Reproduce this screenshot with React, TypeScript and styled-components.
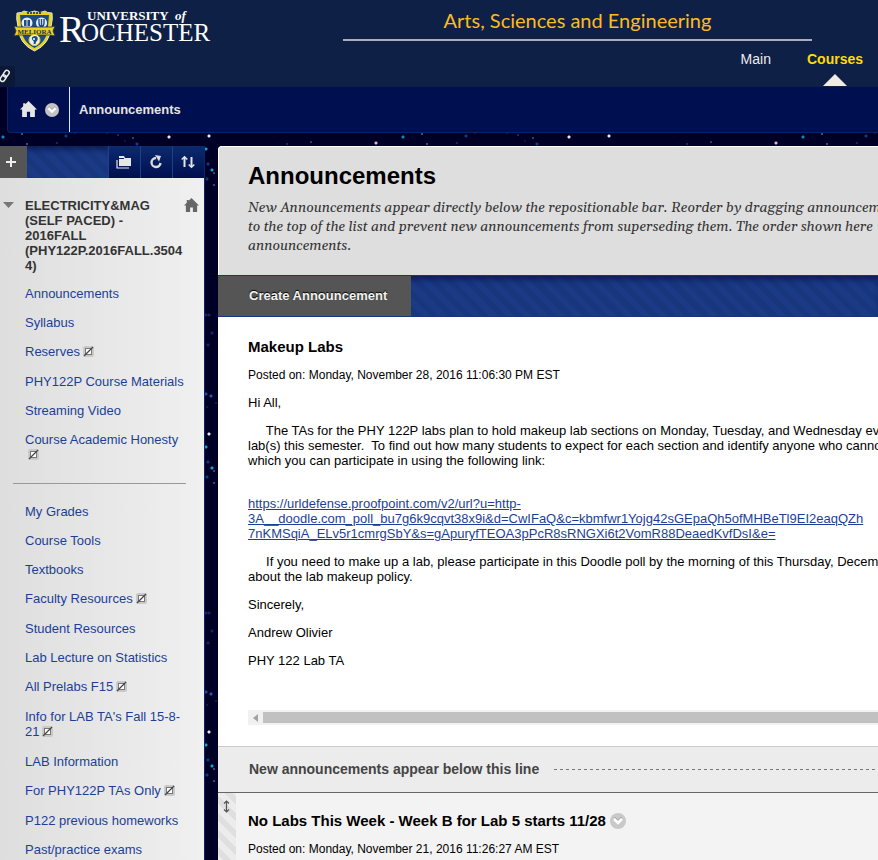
import React from "react";
import styled, { createGlobalStyle, css } from "styled-components";

type Star = [number, number, string, number];

const stars: Star[] = [
  [3, 137, "#1387c4", 1], [22, 134, "#e8ecff", 0], [66, 136, "#0d3c80", 1], [75, 133, "#0b62b8", 0],
  [107, 133, "#4b5378", 0], [118, 135, "#12a3cc", 0], [133, 138, "#b9c4ee", 0], [169, 137, "#f1e6f0", 1],
  [209, 136, "#f1e6ff", 1], [287, 144, "#12a3cc", 0], [311, 142, "#b9c4f4", 0], [376, 143, "#e3b4d9", 1],
  [27, 144, "#ffffff", 0], [57, 143, "#128fcd", 0], [137, 144, "#0d3c80", 1], [125, 141, "#10519a", 0],
  [206, 149, "#12a3cc", 1], [208, 164, "#0d3c80", 1], [212, 170, "#12a3cc", 1], [214, 173, "#e8ecff", 0],
  [207, 179, "#0d3c80", 1], [214, 185, "#e8ecff", 0], [206, 17, "#1b2065", 1], [209, 17, "#1b2065", 1],
  [212, 35, "#1b2065", 1], [208, 47, "#1b2065", 1], [206, 96, "#214b9a", 1], [211, 98, "#2b57a8", 1],
  [207, 109, "#2b57a8", 0], [216, 105, "#2b57a8", 0], [32, 220, "#128fcd", 1],
  [95, 250, "#e8ecff", 0], [330, 60, "#12a3cc", 1],
];

const starField = stars
  .map(([x, y, color, r]) => `radial-gradient(circle at ${x}px ${y}px, ${color} ${r}px, transparent ${r + 1}px)`)
  .join(", ");

const GlobalStyle = createGlobalStyle`
  *, *::before, *::after { box-sizing: border-box; }
  body {
    margin: 0;
    background: #000020;
    font: 13px/15px "Liberation Sans", Arial, sans-serif;
    color: #000;
  }
  p, h1, h2, h3, ul { margin: 0; padding: 0; }
  button { font: inherit; border: 0; padding: 0; cursor: pointer; }
  svg { display: block; }
`;

const stripes = css`
  background: repeating-linear-gradient(45deg, #1a3a86 0 6px, #18367e 6px 12px);
  box-shadow: inset 0 6px 6px -3px rgba(0, 8, 50, 0.6);
`;

const Page = styled.div`
  height: 100vh;
  overflow: hidden;
  display: flex;
  flex-direction: column;
  background-color: #000027;
  background-image: ${starField};
  background-size: 400px 298px;
`;

const Header = styled.header`
  position: relative;
  flex: none;
  display: flex;
  height: 87px;
  background: #0f2046;
`;

const Brand = styled.a`
  flex: none;
  display: flex;
  width: 343px;
  padding: 5px 0 0 12px;
`;

const Banner = styled.div`
  flex: 1;
  display: flex;
  flex-direction: column;
  justify-content: space-between;
`;

const School = styled.div`
  margin-right: 66px;
  height: 41px;
  border-bottom: 2px solid #a9adbc;
  text-align: center;
  font: 20px/41px Lato, sans-serif;
  color: #fdbb1d;
`;

const Tabs = styled.nav`
  display: flex;
  justify-content: flex-end;
  gap: 36px;
  padding-right: 15px;
`;

const Tab = styled.a<{ $active?: boolean }>`
  display: flex;
  flex-direction: column;
  align-items: center;
  height: 37px;
  font-size: 14px;
  line-height: 18px;
  text-decoration: none;
  font-weight: ${(p) => (p.$active ? 700 : 400)};
  color: ${(p) => (p.$active ? "#ffdd00" : "#ececec")};
  &::after {
    content: "";
    display: ${(p) => (p.$active ? "block" : "none")};
    margin-top: 6px;
    border: 12px solid transparent;
    border-top: 0;
    border-bottom-color: #f0ece4;
  }
`;

const QuickLinks = styled.button`
  position: absolute;
  left: 0;
  bottom: 0;
  width: 15px;
  height: 21px;
  background: #0c1836;
  border-radius: 0 4px 0 0;
`;

const Crumbs = styled.nav`
  flex: none;
  display: flex;
  align-items: stretch;
  height: 46px;
  margin-left: 7px;
  background: #000f4f;
  border: 1px solid #06246a;
  border-width: 0 0 1px 1px;
  border-radius: 0 0 0 4px;
`;

const CrumbHome = styled.div`
  display: flex;
  align-items: center;
  gap: 8px;
  width: 62px;
  padding-left: 12px;
  border-right: 1px solid #dfe2ee;
`;

const CrumbLabel = styled.span`
  padding-left: 9px;
  line-height: 45px;
  font-weight: 700;
  color: #e4e4e4;
`;

const IconButton = styled.button`
  display: block;
  background: none;
`;

const Body = styled.div`
  flex: 1;
  min-height: 0;
  display: flex;
  align-items: stretch;
  gap: 13px;
  padding-top: 13px;
`;

const Sidebar = styled.aside`
  flex: none;
  width: 205px;
  overflow: hidden;
  border-right: 1px solid #0c2766;
  background: linear-gradient(to right, #dedede, #f0f0f0);
`;

const MenuBar = styled.div`
  display: flex;
  height: 32px;
  justify-content: flex-end;
  ${stripes}
`;

const AddButton = styled.button`
  width: 27px;
  margin-right: auto;
  display: grid;
  place-items: center;
  padding-right: 5px;
  background: #555;
`;

const ToolButton = styled.button`
  width: 32px;
  display: grid;
  place-items: center;
  background: linear-gradient(#0c2a6e, #000f4f);
  box-shadow: inset 1px 0 #1d4088;
`;

const CourseTitle = styled.div`
  display: flex;
  align-items: flex-start;
  padding: 20px 5px 13px 3px;
`;

const CourseName = styled.h2`
  flex: 1;
  min-width: 0;
  margin-left: 11px;
  font-size: 13px;
  line-height: 15px;
  color: #333;
  overflow-wrap: anywhere;
`;

const Toggle = styled(IconButton)`
  padding-top: 4px;
`;

const Menu = styled.ul`
  list-style: none;
  padding: 0 18px 0 25px;
`;

const MenuItem = styled.li<{ $hidden?: boolean }>`
  padding-bottom: ${(p) => (p.$hidden ? 15 : 14)}px;
`;

const MenuLink = styled.a`
  color: #1c3f95;
  text-decoration: none;
`;

const HiddenMark = styled.span`
  display: inline-block;
  margin-left: 3px;
  vertical-align: -1px;
`;

const Divider = styled.hr`
  margin: 6px 18px 20px 13px;
  border: 0;
  border-top: 1px solid #999;
`;

const Main = styled.main`
  flex: 1;
  min-width: 0;
  overflow: hidden;
  background: #fff;
  border-radius: 4px 0 0 0;
`;

const PageTitle = styled.div`
  padding: 15px 0 19px 29px;
  border: 1px solid #fff;
  border-width: 1px 0 0 1px;
  border-radius: 4px 0 0 0;
  background: #dedede;
`;

const Title = styled.h1`
  font-size: 24px;
  line-height: 28px;
`;

const Instructions = styled.p`
  padding-top: 9px;
  font: italic 14px/19px Georgia, Gelasio, "Liberation Serif", serif;
  white-space: nowrap;
  color: #333;
`;

const ActionBar = styled.div`
  display: flex;
  height: 42px;
  border: solid #17357c;
  border-width: 1px 0;
  ${stripes}
`;

const CreateButton = styled.a`
  padding: 0 24px 0 31px;
  background: #555;
  color: #f2f2f2;
  font-weight: 700;
  font-size: 13px;
  line-height: 40px;
  text-decoration: none;
  text-shadow: 0 -1px 1px #000;
`;

const Post = styled.article`
  padding: 21px 0 0 30px;
  height: 429px;
  display: flex;
  flex-direction: column;
`;

const PostTitle = styled.h3`
  display: flex;
  align-items: center;
  gap: 4px;
  font-size: 15px;
  line-height: 18px;
`;

const Posted = styled.p`
  padding-top: 12px;
  font-size: 12px;
  line-height: 15px;
`;

const Para = styled.p<{ $gap?: number }>`
  padding-top: ${(p) => p.$gap ?? 13}px;
  white-space: pre;
`;

const BodyLink = styled.a`
  color: #1c3f95;
`;

const ScrollTrack = styled.div`
  display: flex;
  align-items: center;
  height: 15px;
  margin: auto 0 21px;
  background: #f1f1f1;
`;

const ScrollArrow = styled.button`
  width: 15px;
  height: 15px;
  display: grid;
  place-items: center;
  background: none;
`;

const ScrollThumb = styled.div`
  flex: 1;
  height: 11px;
  background: #c1c1c1;
`;

const DropLine = styled.div`
  display: flex;
  align-items: center;
  gap: 15px;
  height: 47px;
  padding-left: 31px;
  border-top: 1px solid #ccc;
  border-bottom: 1px solid #666;
  background: #ececec;
  color: #444;
  font-size: 14px;
  font-weight: 700;
  &::after {
    content: "";
    flex: 1;
    height: 1px;
    background: repeating-linear-gradient(to right, #777 0 3px, transparent 3px 6px);
  }
`;

const DraggablePost = styled.article`
  display: flex;
  background: #f3f3f3;
`;

const DragHandle = styled.div`
  width: 18px;
  margin-right: 12px;
  padding: 7px 0 0 5px;
  background: repeating-linear-gradient(45deg, #ececec 0 6px, #dfdfdf 6px 12px);
`;

const DragContent = styled.div`
  padding: 19px 0 40px;
`;

const Crest = () => (
  <svg width="46" height="48" viewBox="0 0 46 48" aria-hidden="true">
    <path d="M5 8Q10 8 12 6Q17 9 22.500 6Q28 9 33 6Q35 8 40 8Q41 13 39 22Q38 39 22.500 46Q7 39 6 22Q4 13 5 8Z" fill="#e9d21b" stroke="#dfe3e8" strokeWidth="1" />
    <path d="M8 10H37L36 22Q35 37 22.500 43Q10 37 9 22Z" fill="#1d4c85" />
    <path d="M15 8H30" stroke="#334e68" strokeWidth="2" strokeDasharray="2 1" />
    <circle cx="15" cy="18" r="5.500" fill="#e8eef2" />
    <circle cx="29.500" cy="18" r="5.500" fill="#e8eef2" />
    <path d="M12 15h2.500v6H12zM15.500 15H18v6h-2.500z" fill="#1d4c85" />
    <path d="M27 14v4q0 3 2.500 4q2.500-1 2.500-4v-4M29.500 14v8" fill="none" stroke="#1d4c85" strokeWidth="1.400" />
    <path d="M2 21L6 22H39L43 21L41 26L43 31L38 30H7L2 31L4 26Z" fill="#e9d21b" stroke="#1d3157" strokeWidth=".8" />
    <text x="22.500" y="29" textAnchor="middle" fontFamily="Liberation Serif, serif" fontWeight="700" fontSize="7" fill="#17305c">MELIORA</text>
    <circle cx="22.500" cy="35" r="5.500" fill="#e8eef2" stroke="#e9d21b" />
    <path d="M22.500 31q4 0 3 4q-2 2-2 4h-2q1-3-1-4q-2-3 2-4Z" fill="#1d4c85" />
    <circle cx="22" cy="34" r="1" fill="#fff" />
  </svg>
);

const Wordmark = () => (
  <svg width="156" height="44" viewBox="0 0 156 44" role="img" aria-label="University of Rochester" fontFamily="Liberation Serif, serif" fill="#fff">
    <text x="29" y="15" fontSize="13" fontWeight="700">UNIVERSITY</text>
    <text x="117" y="15" fontSize="13" fontWeight="700" fontStyle="italic">of</text>
    <text x="1" y="37" fontSize="38">R</text>
    <text x="23" y="36" fontSize="25">OCHESTER</text>
  </svg>
);

const HomeIcon = ({ color, size }: { color: string; size: number }) => (
  <svg width={size} height={size} viewBox="0 0 16 16" fill={color} aria-hidden="true">
    <path d="M8 0L16 8H14V15H9.500V10H6.500V15H2V8H0L3 5V2H5V3Z" />
  </svg>
);

const ChevronCircle = ({ size, fill }: { size: number; fill: string }) => (
  <svg width={size} height={size} viewBox="0 0 16 16" aria-hidden="true">
    <circle cx="8" cy="8" r="8" fill={fill} />
    <path d="M4 6L8 10L12 6" fill="none" stroke="#fff" strokeWidth="2.500" />
    <path d="M4 5L5 4L8 7L11 4L12 5" fill="none" stroke="#999" strokeWidth=".6" />
  </svg>
);

const HiddenIcon = () => (
  <HiddenMark role="img" aria-label="hidden">
    <svg width="11" height="11" viewBox="0 0 11 11">
      <rect width="11" height="11" rx="2" fill="#c9c9c9" />
      <rect x="2.500" y="2.500" width="6" height="6" fill="#fff" stroke="#777" />
      <path d="M1 10L10 1" stroke="#444" strokeWidth="1.300" />
    </svg>
  </HiddenMark>
);

type Entry = { label: string; hidden?: boolean };

const courseLinks: Entry[] = [
  { label: "Announcements" },
  { label: "Syllabus" },
  { label: "Reserves", hidden: true },
  { label: "PHY122P Course Materials" },
  { label: "Streaming Video" },
  { label: "Course Academic Honesty", hidden: true },
];

const resourceLinks: Entry[] = [
  { label: "My Grades" },
  { label: "Course Tools" },
  { label: "Textbooks" },
  { label: "Faculty Resources", hidden: true },
  { label: "Student Resources" },
  { label: "Lab Lecture on Statistics" },
  { label: "All Prelabs F15", hidden: true },
  { label: "Info for LAB TA's Fall 15-8-21", hidden: true },
  { label: "LAB Information" },
  { label: "For PHY122P TAs Only", hidden: true },
  { label: "P122 previous homeworks" },
  { label: "Past/practice exams" },
];

const MenuList = ({ entries }: { entries: Entry[] }) => (
  <Menu>
    {entries.map((e) => (
      <MenuItem key={e.label} $hidden={e.hidden}>
        <MenuLink href="#">{e.label}</MenuLink>
        {e.hidden && <HiddenIcon />}
      </MenuItem>
    ))}
  </Menu>
);

export default function App() {
  return (
    <>
      <GlobalStyle />
      <Page>
        <Header>
          <Brand href="#" aria-label="University of Rochester">
            <Crest />
            <Wordmark />
          </Brand>
          <Banner>
            <School>Arts, Sciences and Engineering</School>
            <Tabs>
              <Tab href="#">Main</Tab>
              <Tab href="#" $active>Courses</Tab>
            </Tabs>
          </Banner>
          <QuickLinks aria-label="Quick links">
            <svg width="12" height="16" viewBox="0 0 12 16" fill="none" stroke="#eee" strokeWidth="1.500">
              <rect x="4" y="1" width="4.500" height="7" rx="2.200" transform="rotate(35 6 4.500)" />
              <rect x="1" y="5.500" width="4.500" height="7" rx="2.200" transform="rotate(35 3 9)" />
            </svg>
          </QuickLinks>
        </Header>

        <Crumbs aria-label="Breadcrumb">
          <CrumbHome>
            <IconButton aria-label="Home"><HomeIcon color="#e6e6e6" size={17} /></IconButton>
            <IconButton aria-label="Courses menu"><ChevronCircle size={14} fill="#c4c4c4" /></IconButton>
          </CrumbHome>
          <CrumbLabel>Announcements</CrumbLabel>
        </Crumbs>

        <Body>
          <Sidebar>
            <MenuBar>
              <AddButton aria-label="Add menu item">
                <svg width="12" height="12" viewBox="0 0 12 12" stroke="#eee" strokeWidth="2">
                  <path d="M6 1V11M1 6H11" />
                </svg>
              </AddButton>
              <ToolButton aria-label="Course folder view">
                <svg width="16" height="13" viewBox="0 0 16 13">
                  <path d="M3 0H8L9 2H15V10H3Z" fill="#e6e6e6" />
                  <path d="M3 2.500H8" stroke="#0a2462" />
                  <path d="M1 4V12H13" fill="none" stroke="#e6e6e6" strokeWidth="1.200" />
                </svg>
              </ToolButton>
              <ToolButton aria-label="Refresh">
                <svg width="14" height="14" viewBox="0 0 14 14">
                  <path d="M7 3A4.500 4.500 0 1 0 11.500 8" fill="none" stroke="#dcdcdc" strokeWidth="2.400" />
                  <path d="M6 0L12 1L10 6.500Z" fill="#dcdcdc" />
                </svg>
              </ToolButton>
              <ToolButton aria-label="Reorder">
                <svg width="14" height="14" viewBox="0 0 14 14" fill="none" stroke="#e6e6e6" strokeWidth="2">
                  <path d="M3.500 12V2M10.500 2V12" />
                  <path d="M.7 4.500L3.500 1.700L6.300 4.500M7.700 9.500L10.500 12.300L13.300 9.500" strokeWidth="1.500" />
                </svg>
              </ToolButton>
            </MenuBar>
            <CourseTitle>
              <Toggle aria-label="Collapse course menu">
                <svg width="11" height="6" viewBox="0 0 11 6"><path d="M0 0H11L5.500 6Z" fill="#777" /></svg>
              </Toggle>
              <CourseName>ELECTRICITY&amp;MAG (SELF PACED) - 2016FALL (PHY122P.2016FALL.35044)</CourseName>
              <IconButton aria-label="Course home"><HomeIcon color="#666" size={15} /></IconButton>
            </CourseTitle>
            <MenuList entries={courseLinks} />
            <Divider />
            <MenuList entries={resourceLinks} />
          </Sidebar>

          <Main>
            <PageTitle>
              <Title>Announcements</Title>
              <Instructions>
                New Announcements appear directly below the repositionable bar. Reorder by dragging announcements<br />
                to the top of the list and prevent new announcements from superseding them. The order shown here<br />
                announcements.
              </Instructions>
            </PageTitle>
            <ActionBar>
              <CreateButton href="#">Create Announcement</CreateButton>
            </ActionBar>

            <Post>
              <PostTitle>Makeup Labs</PostTitle>
              <Posted>Posted on: Monday, November 28, 2016 11:06:30 PM EST</Posted>
              <Para $gap={12}>Hi All,</Para>
              <Para>
                {"     The TAs for the PHY 122P labs plan to hold makeup lab sections on Monday, Tuesday, and Wednesday evenings\n"}
                {"lab(s) this semester.  To find out how many students to expect for each section and identify anyone who cannot\n"}
                {"which you can participate in using the following link:"}
              </Para>
              <Para $gap={28}>
                <BodyLink href="#">
                  {"https://urldefense.proofpoint.com/v2/url?u=http-\n"}
                  {"3A__doodle.com_poll_bu7g6k9cqvt38x9i&d=CwIFaQ&c=kbmfwr1Yojg42sGEpaQh5ofMHBeTl9EI2eaqQZh\n"}
                  {"7nKMSqiA_ELv5r1cmrgSbY&s=gApuryfTEOA3pPcR8sRNGXi6t2VomR88DeaedKvfDsI&e="}
                </BodyLink>
              </Para>
              <Para>
                {"     If you need to make up a lab, please participate in this Doodle poll by the morning of this Thursday, December\n"}
                {"about the lab makeup policy."}
              </Para>
              <Para>Sincerely,</Para>
              <Para>Andrew Olivier</Para>
              <Para>PHY 122 Lab TA</Para>
              <ScrollTrack>
                <ScrollArrow aria-label="Scroll left">
                  <svg width="5" height="8" viewBox="0 0 5 8"><path d="M5 0V8L0 4Z" fill="#a3a3a3" /></svg>
                </ScrollArrow>
                <ScrollThumb />
              </ScrollTrack>
            </Post>

            <DropLine>New announcements appear below this line</DropLine>

            <DraggablePost>
              <DragHandle>
                <svg width="7" height="13" viewBox="0 0 7 13" fill="none" stroke="#555" strokeWidth="1.200">
                  <path d="M3.500 1V12M1 3.500L3.500 1L6 3.500M1 9.500L3.500 12L6 9.500" />
                </svg>
              </DragHandle>
              <DragContent>
                <PostTitle>
                  No Labs This Week - Week B for Lab 5 starts 11/28
                  <IconButton aria-label="Announcement options"><ChevronCircle size={16} fill="#c9c9c9" /></IconButton>
                </PostTitle>
                <Posted>Posted on: Monday, November 21, 2016 11:26:27 AM EST</Posted>
              </DragContent>
            </DraggablePost>
          </Main>
        </Body>
      </Page>
    </>
  );
}
